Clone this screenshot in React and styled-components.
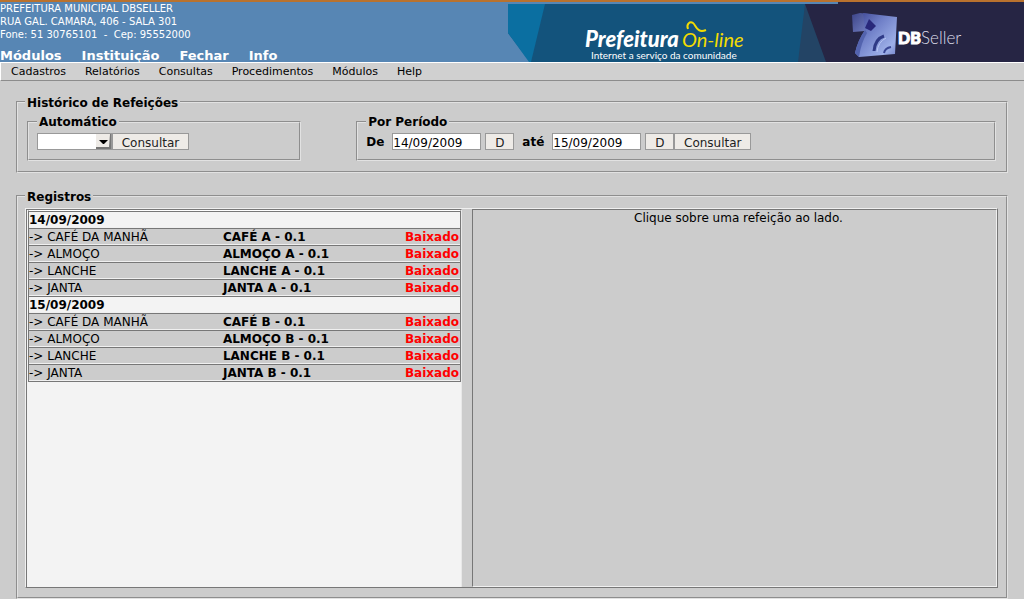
import React from 'react';
import styled, { createGlobalStyle } from 'styled-components';

const GlobalStyle = createGlobalStyle`
  * { box-sizing: border-box; }
  body {
    margin: 0;
    background: #cccccc;
    color: #000;
    font-family: "DejaVu Sans", Verdana, sans-serif;
    font-size: 12px;
  }
`;

const Page = styled.div`
  display: flex;
  flex-direction: column;
  min-height: 100vh;
`;

const Header = styled.header`
  display: flex;
  justify-content: space-between;
  height: 62px;
  background: #5786b4;
  border-top: 2px solid #b9722e;
  overflow: hidden;
`;

const HeaderInfo = styled.div`
  display: flex;
  flex-direction: column;
  justify-content: space-between;
  color: #fff;
`;

const Address = styled.address`
  font-style: normal;
  font-size: 10px;
  line-height: 13px;
  white-space: pre;
`;

const ModuleNav = styled.nav`
  display: flex;
  gap: 20px;
`;

const ModuleLink = styled.a`
  color: #fff;
  font-size: 13px;
  font-weight: bold;
  line-height: 12px;
  text-decoration: none;
`;

const Banner = styled.svg`
  display: block;
  flex: none;
  width: 516px;
  height: 60px;
`;

const MenuBar = styled.nav`
  display: flex;
  gap: 19px;
  padding: 0 10px;
  background: #d0d0d0;
  border-top: 1px solid #fff;
  border-left: 1px solid #fff;
  border-bottom: 1px solid #8c8c8c;
`;

const MenuLink = styled.a`
  color: #000;
  font-size: 11px;
  line-height: 17px;
  text-decoration: none;
`;

const Main = styled.main`
  display: flex;
  flex-direction: column;
  gap: 16px;
  padding: 14px 16px 0;
`;

const Group = styled.fieldset`
  min-width: 0;
  margin: 0;
  border: 2px groove #e2e2e2;
  padding: ${(p) => p.$pad};
`;

const Legend = styled.legend`
  padding: 0 2px;
  font-weight: bold;
  line-height: 14px;
`;

const SectionLegend = styled(Legend)`
  padding-top: 2px;
  line-height: 12px;
`;

const Filters = styled.div`
  display: grid;
  grid-template-columns: 3fr 7fr;
  gap: 55px;
  padding-left: 2px;
`;

const Controls = styled.form`
  display: flex;
  align-items: center;
`;

const Select = styled.select`
  appearance: none;
  width: 75px;
  height: 17px;
  padding: 0;
  border: 1px solid #999;
  border-radius: 0;
  background: #fff;
  font: inherit;
`;

const SelectWrap = styled.span`
  position: relative;
  display: flex;
`;

const Arrow = styled.svg`
  position: absolute;
  top: 1px;
  right: 1px;
  width: 15px;
  height: 15px;
  pointer-events: none;
`;

const Button = styled.button`
  height: 17px;
  width: ${(p) => (p.$small ? 29 : 77)}px;
  margin: 0;
  padding: 3px 0 0;
  border: 1px solid #999;
  border-radius: 0;
  background: #eeebe7;
  color: #222;
  font: inherit;
  line-height: 12px;
`;

const DateLabel = styled.label`
  display: flex;
  align-items: center;
  gap: 8px;
  margin-right: 4px;
  font-weight: bold;
  ${Button} + & { margin-left: 8px; }
`;

const DateInput = styled.input`
  width: 89px;
  height: 17px;
  padding: 2px 0 0;
  border: 1px solid #999;
  background: #fff;
  color: #000;
  font: inherit;
  font-weight: normal;
  line-height: 13px;
`;

const Records = styled.div`
  display: grid;
  grid-template-columns: 436fr 525fr;
  gap: 10px;
  min-height: calc(100vh - 219px);
  border: 1px solid;
  border-color: #f0f0f0 #777 #777 #f0f0f0;
`;

const ListPane = styled.section`
  min-width: 0;
  background: #f3f3f3;
  border: 1px solid;
  border-color: #777 #e8e8e8 #777 #777;
  border-bottom: 0;
  padding-left: 1px;
`;

const DetailPane = styled.section`
  min-width: 0;
  padding: 1px 0 0 8px;
  border: 1px solid;
  border-color: #777 #f0f0f0 #f0f0f0 #777;
  line-height: 15px;
  text-align: center;
`;

const MealTable = styled.table`
  width: 100%;
  border-collapse: separate;
  border-spacing: 0;
  border: 1px solid;
  border-color: #fff #777 #777 #777;
`;

const Cell = styled.td`
  height: 17px;
  padding: 2px 0 0;
  background: #cccccc;
  border-top: 1px solid #777;
  border-bottom: 1px solid #f0f0f0;
  line-height: 13px;
  text-align: left;
  width: ${(p) => p.$width || 'auto'};
  font-weight: ${(p) => (p.$strong ? 'bold' : 'normal')};
`;

const Status = styled(Cell)`
  padding-right: 1px;
  color: #f00;
  font-weight: bold;
  text-align: right;
`;

const DayCell = styled(Cell)`
  background: #f3f3f3;
  font-weight: bold;
`;

const meals = [
  ['CAFÉ DA MANHÃ', 'CAFÉ'],
  ['ALMOÇO', 'ALMOÇO'],
  ['LANCHE', 'LANCHE'],
  ['JANTA', 'JANTA'],
];

const days = [
  { date: '14/09/2009', menu: 'A' },
  { date: '15/09/2009', menu: 'B' },
];

function HeaderBanner() {
  return (
    <Banner viewBox="0 0 516 60" role="img" aria-label="Prefeitura On-line, DBSeller">
      <defs>
        <linearGradient id="cube" x1="0" y1="0" x2="1" y2="1">
          <stop offset="0" stopColor="#39418f" />
          <stop offset="0.4" stopColor="#7080c8" />
          <stop offset="0.8" stopColor="#9eb0e8" />
          <stop offset="1" stopColor="#6f7fc4" />
        </linearGradient>
        <linearGradient id="side" x1="0" y1="0" x2="1" y2="1">
          <stop offset="0" stopColor="#3c4488" />
          <stop offset="1" stopColor="#7481c2" />
        </linearGradient>
      </defs>
      <path d="M0 2H330V60H22L0 31Z" fill="#13537c" />
      <path d="M0 2H37L23 60H21L0 31Z" fill="#0b6fa1" />
      <path d="M297 2H330V60H290Z" fill="#234465" />
      <path d="M297 2H330V0H516V60H318Z" fill="#262544" />
      <text x="77" y="45" fontFamily="Lato, sans-serif" fontSize="22" fontWeight="900" fontStyle="italic" fill="#fff">Prefeitura</text>
      <text x="174" y="45" fontFamily="Lato, sans-serif" fontSize="20" fontStyle="italic" fill="#f4dc00">On-line</text>
      <path d="M180 27C178 22 182 19 185 21C188 23 189 32 198 28" fill="none" stroke="#f4dc00" strokeWidth="2" />
      <text x="83" y="57" fontFamily="Lato, sans-serif" fontSize="10" fill="#fff">Internet a serviço da comunidade</text>
      <path d="M344 13L352 11L361 12L357 29L345 30Z" fill="url(#side)" />
      <path d="M355 11L389 15L387 52L351 55L347 51Q350 38 357 28Z" fill="url(#cube)" />
      <path d="M347 51Q350 38 357 28L359 31Q353 41 351 55Z" fill="#5363ae" />
      <path d="M361 17L368 24L363 29L357 26Z" fill="#28287a" />
      <path d="M376 34Q367 37 366 49" fill="none" stroke="#2f3a86" strokeWidth="3" />
      <path d="M383 45Q377 46 376 51" fill="none" stroke="#3a4795" strokeWidth="2" />
      <path d="M378 36Q370 40 369 50" fill="none" stroke="#b8c6f4" strokeWidth="1" />
      <text x="390" y="42" fontFamily="Lato, sans-serif" fontSize="16" fontWeight="900" fill="#fff" stroke="#fff" strokeWidth="1">DB</text>
      <text x="413" y="42" fontFamily="Lato, sans-serif" fontSize="17" fontWeight="300" fill="#dcdce8">Seller</text>
    </Banner>
  );
}

export default function App() {
  return (
    <Page>
      <GlobalStyle />
      <Header>
        <HeaderInfo>
          <Address>
            PREFEITURA MUNICIPAL DBSELLER<br />
            RUA GAL. CAMARA, 406 - SALA 301<br />
            {'Fone: 51 30765101  -  Cep: 95552000'}
          </Address>
          <ModuleNav>
            {['Módulos', 'Instituição', 'Fechar', 'Info'].map((t) => (
              <ModuleLink href="#" key={t}>{t}</ModuleLink>
            ))}
          </ModuleNav>
        </HeaderInfo>
        <HeaderBanner />
      </Header>
      <MenuBar>
        {['Cadastros', 'Relatórios', 'Consultas', 'Procedimentos', 'Módulos', 'Help'].map((t) => (
          <MenuLink href="#" key={t}>{t}</MenuLink>
        ))}
      </MenuBar>
      <Main>
        <Group $pad="6px 10px 10px 7px">
          <SectionLegend>Histórico de Refeições</SectionLegend>
          <Filters>
            <Group $pad="4px 8px 9px">
              <Legend>Automático</Legend>
              <Controls>
                <SelectWrap>
                  <Select aria-label="Automático"><option> </option></Select>
                  <Arrow viewBox="0 0 15 15" aria-hidden="true">
                    <path d="M0 0H15V15H0Z" fill="#777" />
                    <path d="M0 0H14L13 13H0Z" fill="#eeebe7" />
                    <path d="M3 6H12L8 10H7Z" fill="#000" />
                  </Arrow>
                </SelectWrap>
                <Button type="button">Consultar</Button>
              </Controls>
            </Group>
            <Group $pad="4px 8px 9px">
              <Legend>Por Período</Legend>
              <Controls>
                <DateLabel>De <DateInput defaultValue="14/09/2009" /></DateLabel>
                <Button type="button" $small>D</Button>
                <DateLabel>até <DateInput defaultValue="15/09/2009" /></DateLabel>
                <Button type="button" $small>D</Button>
                <Button type="button">Consultar</Button>
              </Controls>
            </Group>
          </Filters>
        </Group>
        <Group $pad="5px 8px 9px 7px">
          <SectionLegend>Registros</SectionLegend>
          <Records>
            <ListPane>
              <MealTable>
                <tbody>
                  {days.map((day) => (
                    <React.Fragment key={day.date}>
                      <tr><DayCell as="th" colSpan={3} scope="colgroup">{day.date}</DayCell></tr>
                      {meals.map(([meal, dish]) => (
                        <tr key={meal}>
                          <Cell $width="45%">{`-> ${meal}`}</Cell>
                          <Cell $strong>{`${dish} ${day.menu} - 0.1`}</Cell>
                          <Status>Baixado</Status>
                        </tr>
                      ))}
                    </React.Fragment>
                  ))}
                </tbody>
              </MealTable>
            </ListPane>
            <DetailPane>Clique sobre uma refeição ao lado.</DetailPane>
          </Records>
        </Group>
      </Main>
    </Page>
  );
}
